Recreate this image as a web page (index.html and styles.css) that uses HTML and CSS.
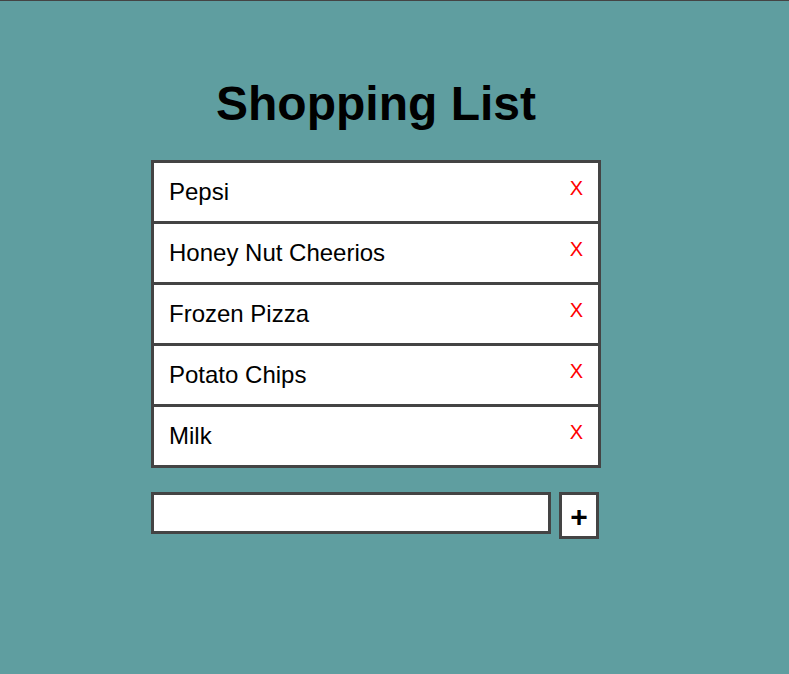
FILE: index.html
```html
<!DOCTYPE html>
<html lang="en">
<head>
<meta charset="utf-8">
<title>Shopping List</title>
<link rel="stylesheet" href="styles.css">
</head>
<body>
<div class="app">
  <h1 class="title">Shopping List</h1>
  <ul class="list">
    <li class="item"><span class="name">Pepsi</span><span class="remove">X</span></li>
    <li class="item"><span class="name">Honey Nut Cheerios</span><span class="remove">X</span></li>
    <li class="item"><span class="name">Frozen Pizza</span><span class="remove">X</span></li>
    <li class="item"><span class="name">Potato Chips</span><span class="remove">X</span></li>
    <li class="item"><span class="name">Milk</span><span class="remove">X</span></li>
  </ul>
  <form class="add-form">
    <input class="add-input" type="text">
    <button class="add-button" type="button">+</button>
  </form>
</div>
</body>
</html>
```
FILE: styles.css
```css
html, body {
  margin: 0;
  padding: 0;
}
body {
  background: #5f9ea0;
  border-top: 1px solid #444;
  min-height: 673px;
  font-family: "Liberation Sans", Arial, sans-serif;
  color: #000;
}
.app {
  width: 450px;
  margin-left: 151px;
}
.title {
  margin: 75px 0 29px;
  font-size: 48px;
  line-height: 55px;
  font-weight: bold;
  text-align: center;
}
.list {
  list-style: none;
  margin: 0;
  padding: 0;
  border: 3px solid #444;
  background: #fff;
}
.item {
  display: flex;
  justify-content: space-between;
  align-items: flex-start;
  padding: 15px 15px 15px 15px;
  font-size: 24px;
  line-height: 28px;
  border-top: 3px solid #444;
}
.item:first-child {
  border-top: none;
}
.remove {
  color: #f00;
  font-size: 20px;
  line-height: 20px;
  cursor: pointer;
}
.add-form {
  display: flex;
  align-items: flex-start;
  gap: 8px;
  margin: 24px 0 0;
}
.add-input {
  box-sizing: border-box;
  width: 400px;
  height: 42px;
  border: 3px solid #444;
  background: #fff;
  margin: 0;
  padding: 0 8px;
  font-family: "Liberation Sans", Arial, sans-serif;
  font-size: 20px;
  outline: none;
}
.add-button {
  box-sizing: border-box;
  width: 40px;
  height: 47px;
  border: 3px solid #444;
  background: #fff;
  margin: 0;
  padding: 2px 0 0;
  display: flex;
  align-items: center;
  justify-content: center;
  font-family: "Liberation Sans", Arial, sans-serif;
  font-size: 30px;
  font-weight: bold;
  line-height: 1;
  color: #000;
  cursor: pointer;
}
```
